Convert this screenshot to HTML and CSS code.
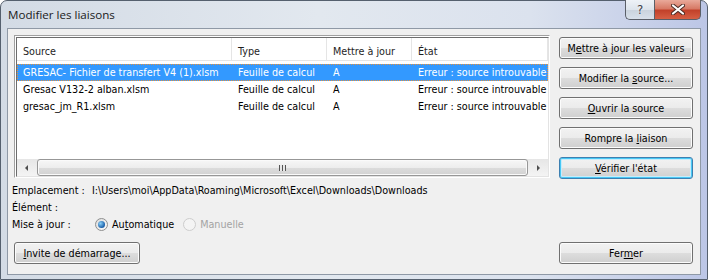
FILE: index.html
```html
<!DOCTYPE html>
<html lang="fr">
<head>
  <meta charset="UTF-8">
  <title>Modifier les liaisons</title>
  <link rel="stylesheet" href="styles.css">
</head>
<body>
  <div class="window">
    <!-- Title bar -->
    <div class="titlebar">
      <span class="title">Modifier les liaisons</span>
      <div class="caption-buttons">
        <div class="cap-btn help">?</div>
        <div class="cap-btn close">
          <svg width="14" height="11" viewBox="0 0 14 11">
            <path d="M2 1.5 L12 9.5 M12 1.5 L2 9.5" stroke="#4a2a24" stroke-width="4" stroke-linecap="round"/>
            <path d="M2 1.5 L12 9.5 M12 1.5 L2 9.5" stroke="#fff" stroke-width="2.2" stroke-linecap="round"/>
          </svg>
        </div>
      </div>
    </div>

    <div class="client">
      <div class="main">
        <!-- Links list -->
        <div class="list">
          <div class="list-inner">
            <div class="cols list-head">
              <div>Source</div>
              <div>Type</div>
              <div>Mettre à jour</div>
              <div>État</div>
            </div>
            <div class="list-body">
              <div class="cols item selected">
                <div>GRESAC- Fichier de transfert V4 (1).xlsm</div>
                <div>Feuille de calcul</div>
                <div>A</div>
                <div>Erreur : source introuvable</div>
              </div>
              <div class="cols item">
                <div>Gresac V132-2 alban.xlsm</div>
                <div>Feuille de calcul</div>
                <div>A</div>
                <div>Erreur : source introuvable</div>
              </div>
              <div class="cols item">
                <div>gresac_jm_R1.xlsm</div>
                <div>Feuille de calcul</div>
                <div>A</div>
                <div>Erreur : source introuvable</div>
              </div>
            </div>
            <div class="hscroll">
              <div class="arrow"><span class="tri left"></span></div>
              <div class="thumb"><span class="grip"></span></div>
              <div class="arrow"><span class="tri right"></span></div>
            </div>
          </div>
        </div>

        <!-- Actions -->
        <div class="side-buttons">
          <button class="btn">M<u>e</u>ttre à jour les valeurs</button>
          <button class="btn">Modifier la <u>s</u>ource...</button>
          <button class="btn"><u>O</u>uvrir la source</button>
          <button class="btn">Rompre la <u>l</u>iaison</button>
          <button class="btn focused"><u>V</u>érifier l'état</button>
        </div>
      </div>

      <div class="info">
        <div class="info-row">
          <span class="label">Emplacement :</span>
          <span>I:\Users\moi\AppData\Roaming\Microsoft\Excel\Downloads\Downloads</span>
        </div>
        <div class="info-row">
          <span class="label">Élément :</span>
        </div>
        <div class="info-row">
          <span class="label">Mise à jour :</span>
          <span class="radio checked"></span>
          <span class="radio-text">Au<u>t</u>omatique</span>
          <span class="radio disabled"></span>
          <span class="radio-text disabled-text">Manuelle</span>
        </div>
      </div>

      <div class="footer">
        <button class="btn btn-invite"><u>I</u>nvite de démarrage...</button>
        <button class="btn btn-close">Fer<u>m</u>er</button>
      </div>
    </div>
  </div>
</body>
</html>
```

FILE: styles.css
```css
* { margin: 0; padding: 0; box-sizing: border-box; }
body {
  font-family: "DejaVu Sans Condensed", "DejaVu Sans", sans-serif;
  font-stretch: condensed;
  font-size: 10.7px;
  color: #000;
  background: #fff;
}
u { text-decoration: underline; text-underline-offset: 1px; }

/* Window frame */
.window {
  width: 708px;
  height: 280px;
  border: 1px solid #55606e;
  border-radius: 7px 7px 0 0;
  background: linear-gradient(to right, #d3dbe5 0%, #e2e8ef 45%, #dbe2ee 75%, #bcc6e6 100%);
}
.titlebar {
  height: 27px;
  display: flex;
  justify-content: space-between;
  align-items: flex-start;
}
.title {
  font-family: "Open Sans", "DejaVu Sans", sans-serif;
  font-stretch: normal;
  font-size: 11.6px;
  color: #1a1a1a;
  padding: 6px 0 0 7px;
}
.caption-buttons {
  display: flex;
  margin: -1px 6px 0 0;
}
.cap-btn {
  height: 20px;
  border: 1px solid #5a5f68;
  border-top: none;
  display: flex;
  align-items: center;
  justify-content: center;
}
.help {
  width: 29px;
  border-right: none;
  border-radius: 0 0 0 5px;
  background: linear-gradient(#eef2f7 0%, #dde4ec 50%, #c9d2dc 51%, #d8e0ea 100%);
  font-family: "DejaVu Sans", sans-serif;
  font-size: 13px;
  color: #3c4048;
  text-shadow: 0 0 2px #fff;
}
.close {
  width: 47px;
  border-radius: 0 0 5px 0;
  background: linear-gradient(#e9a99a 0%, #d77a66 45%, #c2412a 55%, #d65f44 100%);
}

/* Client area */
.client {
  height: 247px;
  margin: 0 6px;
  border: 1px solid #8f99a6;
  background: #f0f0f0;
}
.main {
  display: flex;
  padding: 6px 7px 0 6px;
  gap: 9px;
}

/* List view */
.list {
  width: 536px;
  height: 143px;
  border: 1px solid;
  border-color: #a0a0a0 #fff #fff #a0a0a0;
  background: #fff;
  padding: 1px 0 0 1px;
}
.list-inner {
  height: 100%;
  border: 1px solid;
  border-color: #6d6d6d #e3e3e3 #e3e3e3 #6d6d6d;
  display: flex;
  flex-direction: column;
}
.cols {
  display: grid;
  grid-template-columns: 215px 95px 85px 1fr;
  white-space: nowrap;
}
.cols > div { padding-left: 6px; overflow: hidden; }
.list-head {
  height: 23px;
  border-bottom: 1px solid #e5e5e5;
  color: #1e1e1e;
}
.list-head > div {
  border-right: 1px solid #e5e5e5;
  padding-top: 7px;
}
.list-body {
  flex: 1;
  padding-top: 3px;
}
.item {
  height: 17px;
  line-height: 17px;
}
.item.selected {
  background: #3399ff;
  color: #fff;
  outline: 1px dotted #e8913a;
  outline-offset: -1px;
}

/* Horizontal scrollbar */
.hscroll {
  height: 17px;
  display: flex;
  background: linear-gradient(#e6e6e6, #f4f4f4);
}
.arrow {
  width: 19px;
  display: flex;
  align-items: center;
  justify-content: center;
}
.tri { width: 0; height: 0; border-top: 3px solid transparent; border-bottom: 3px solid transparent; }
.tri.left { border-right: 3px solid #4d4d4d; }
.tri.right { border-left: 3px solid #4d4d4d; }
.thumb {
  flex: 1;
  margin: 0 1px;
  border: 1px solid #979797;
  border-radius: 3px;
  background: linear-gradient(#f7f7f7 0%, #ededed 50%, #dcdcdc 51%, #d2d2d2 100%);
  box-shadow: inset 0 0 0 1px #fafafa;
  display: flex;
  align-items: center;
  justify-content: center;
}
.grip {
  width: 7px;
  height: 6px;
  background: repeating-linear-gradient(to right, #555 0 1px, #e8e8e8 1px 3px);
}

/* Buttons */
.btn {
  font: inherit;
  height: 22px;
  border: 1px solid #707070;
  border-radius: 3px;
  background: linear-gradient(#f2f2f2 0%, #ebebeb 50%, #dddddd 51%, #cfcfcf 100%);
  box-shadow: inset 0 0 0 1px #fcfcfc;
  color: #000;
}
.btn.focused {
  border-color: #3c7fb1;
  box-shadow: inset 0 0 0 1px #48c8f5, inset 0 0 0 2px #c6ecfb;
}
.side-buttons {
  width: 134px;
  display: flex;
  flex-direction: column;
  gap: 8px;
  padding-top: 2px;
}

/* Info rows */
.info {
  padding: 3px 0 0 4px;
}
.info-row {
  height: 17px;
  display: flex;
  align-items: center;
}
.label { width: 80px; }
.radio {
  width: 13px;
  height: 13px;
  border-radius: 50%;
  border: 1px solid #8e8f8f;
  background: linear-gradient(135deg, #dcdcdc, #fbfbfb);
  margin: 0 3px 0 3px;
  display: flex;
  align-items: center;
  justify-content: center;
}
.radio.checked::after {
  content: "";
  width: 7px;
  height: 7px;
  border-radius: 50%;
  background: radial-gradient(circle at 35% 35%, #8ad0f8, #1a5fa8 70%);
}
.radio.disabled {
  margin-left: 9px;
  border-color: #cdcdcd;
  background: #f4f4f4;
}
.radio-text { padding-left: 1px; }
.disabled-text { color: #a3a3a3; }

/* Footer */
.footer {
  display: flex;
  justify-content: space-between;
  padding: 0 7px 0 6px;
  margin-top: 9px;
}
.btn-invite { width: 126px; }
.btn-close { width: 134px; }
```
